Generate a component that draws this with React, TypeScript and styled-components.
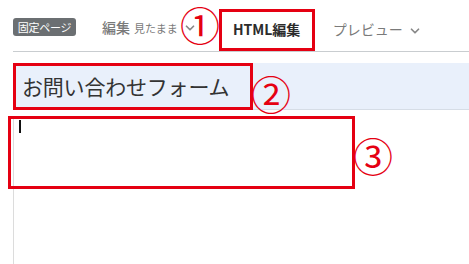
import styled, { createGlobalStyle } from 'styled-components';
import { ChevronDown } from 'lucide-react';

const GlobalStyle = createGlobalStyle`
  html, body {
    margin: 0;
    padding: 0;
    background: #ffffff;
  }
  body {
    font-family: 'Noto Sans CJK JP', 'Noto Sans', sans-serif;
    color: #333;
  }
`;

const red = '#e50012';

const Page = styled.div`
  position: relative;
  width: 469px;
  height: 264px;
  overflow: hidden;
  padding-left: 13px;
  box-sizing: border-box;
`;

const Header = styled.div`
  display: flex;
  align-items: center;
  height: 51px;
  border-bottom: 1px solid #c9cdd0;
`;

const Badge = styled.span`
  display: inline-flex;
  align-items: center;
  justify-content: center;
  width: 63px;
  height: 18px;
  margin-top: 3px;
  background: #6b6f72;
  color: #fff;
  font-size: 11px;
  border-radius: 3px;
  letter-spacing: -0.3px;
`;

const Mode = styled.div`
  display: flex;
  align-items: baseline;
  margin-left: 26px;
  margin-top: 3px;
  color: #7a7a7a;
`;

const ModeMain = styled.span`
  font-size: 14px;
  font-weight: 500;
`;

const ModeSub = styled.span`
  font-size: 11px;
  margin-left: 4px;
`;

const Caret = styled(ChevronDown)`
  align-self: center;
  margin-left: 5px;
  margin-top: 4px;
  color: #888;
`;

const Tab = styled.div<{ $active?: boolean }>`
  display: flex;
  align-items: center;
  justify-content: center;
  align-self: flex-end;
  white-space: nowrap;
  height: 42px;
  box-sizing: border-box;
  margin-left: ${p => (p.$active ? 22 : 18)}px;
  font-size: 14px;
  font-weight: ${p => (p.$active ? 700 : 400)};
  color: ${p => (p.$active ? '#2b2b2b' : '#7a7a7a')};
  border-bottom: 2px solid ${p => (p.$active ? '#4a6fd0' : 'transparent')};
  outline: ${p => (p.$active ? `3px solid ${red}` : 'none')};
  outline-offset: -3px;
  width: ${p => (p.$active ? '96px' : 'auto')};
`;

const TitleBar = styled.div`
  margin-top: 11px;
  height: 46px;
  background: #e9f0fb;
  border-bottom: 1px solid #d6dde6;
  display: flex;
  align-items: center;
  padding-left: 9px;
  font-size: 21px;
  letter-spacing: -0.2px;
  color: #333;
`;

const Editor = styled.div`
  margin-top: 8px;
  height: 150px;
  border-left: 1px solid #dcdcdc;
  padding: 2px 0 0 5px;
`;

const Cursor = styled.span`
  display: block;
  width: 2px;
  height: 13px;
  background: #111;
`;

const Frame = styled.div<{ $x: number; $y: number; $w: number; $h: number }>`
  position: absolute;
  left: ${p => p.$x}px;
  top: ${p => p.$y}px;
  width: ${p => p.$w}px;
  height: ${p => p.$h}px;
  box-sizing: border-box;
  border: 3px solid ${red};
  pointer-events: none;
`;

const Marker = styled.span<{ $x: number; $y: number }>`
  position: absolute;
  left: ${p => p.$x}px;
  top: ${p => p.$y}px;
  font-size: 40px;
  line-height: 48px;
  color: ${red};
  font-family: 'Noto Sans CJK JP', sans-serif;
`;

export default function App() {
  return (
    <>
      <GlobalStyle />
      <Page>
        <Header>
          <Badge>固定ページ</Badge>
          <Mode>
            <ModeMain>編集</ModeMain>
            <ModeSub>見たまま</ModeSub>
          </Mode>
          <Caret size={14} strokeWidth={3} />
          <Tab $active>HTML編集</Tab>
          <Tab>
            プレビュー
            <Caret size={14} strokeWidth={3} />
          </Tab>
        </Header>
        <TitleBar>お問い合わせフォーム</TitleBar>
        <Editor>
          <Cursor />
        </Editor>

        <Frame $x={13} $y={63} $w={240} $h={47} />
        <Frame $x={8} $y={116} $w={347} $h={73} />
        <Marker $x={180} $y={0}>①</Marker>
        <Marker $x={251} $y={69}>②</Marker>
        <Marker $x={353} $y={131}>③</Marker>
      </Page>
    </>
  );
}
